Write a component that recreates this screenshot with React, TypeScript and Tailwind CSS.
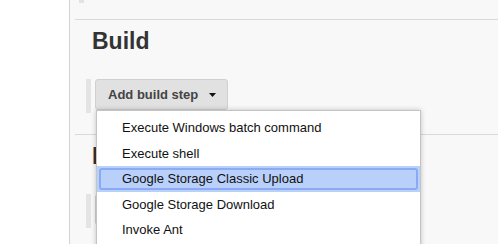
import React from "react";

const items = [
  "Execute Windows batch command",
  "Execute shell",
  "Google Storage Classic Upload",
  "Google Storage Download",
  "Invoke Ant",
];

function Caret() {
  return (
    <svg width="8" height="5" viewBox="0 0 8 5" className="ml-[11px] mt-[1px]">
      <path d="M0 0 H7 L3.5 4 Z" fill="#111" />
    </svg>
  );
}

function Section({ title, button }: { title: string; button: string }) {
  return (
    <div>
      <div className="h-px bg-[#d9d9d9]" />
      <h2 className="mt-[8px] ml-[17px] text-[23px] leading-[26px] font-bold text-[#333]">{title}</h2>
      <div className="mt-[25px] ml-[11px] flex items-start">
        <div className="w-[5px] h-[34px] bg-[#e4e4e4]" />
        <div className="ml-[4px] h-[31px] flex items-center pl-[12px] pr-[10px] bg-[#e1e1e1] border border-[#d0d0d0] rounded-[3px] text-[13px] font-bold text-[#444]">
          {button}
          <Caret />
        </div>
      </div>
      <div className="h-[21px]" />
    </div>
  );
}

export default function App() {
  return (
    <div
      className="flex w-[498px] h-[244px] overflow-hidden bg-white"
      style={{ fontFamily: '"Liberation Sans", Arial, sans-serif' }}
    >
      <div className="w-[69px] shrink-0 bg-white" />
      <div className="relative flex-1 bg-[#f8f8f8] border-l border-[#d3d3d3] pl-[5px]">
        <div className="h-[19px]">
          <div className="ml-[4px] w-[5px] h-[3px] bg-[#e2e2e2]" />
        </div>
        <Section title="Build" button="Add build step" />
        <Section title="Post-build Actions" button="Add post-build action" />

        <div className="absolute left-[26px] top-[110px] w-[325px] h-[150px] bg-white border border-[#c4c4c4] shadow-[0_0_5px_rgba(0,0,0,0.22)] pt-[4px] text-[13px] text-[#111]">
          {items.map((it, i) => {
            const hi = i === 2;
            return (
              <div key={it} className={`h-[25.5px] px-[2px] py-[2px] ${hi ? "bg-[#b9d0fb]" : ""}`}>
                <div
                  className={`h-full flex items-center pl-[21px] rounded-[3px] border-2 ${
                    hi ? "border-[#8aaaf4]" : "border-transparent"
                  }`}
                >
                  {it}
                </div>
              </div>
            );
          })}
        </div>
      </div>
    </div>
  );
}
